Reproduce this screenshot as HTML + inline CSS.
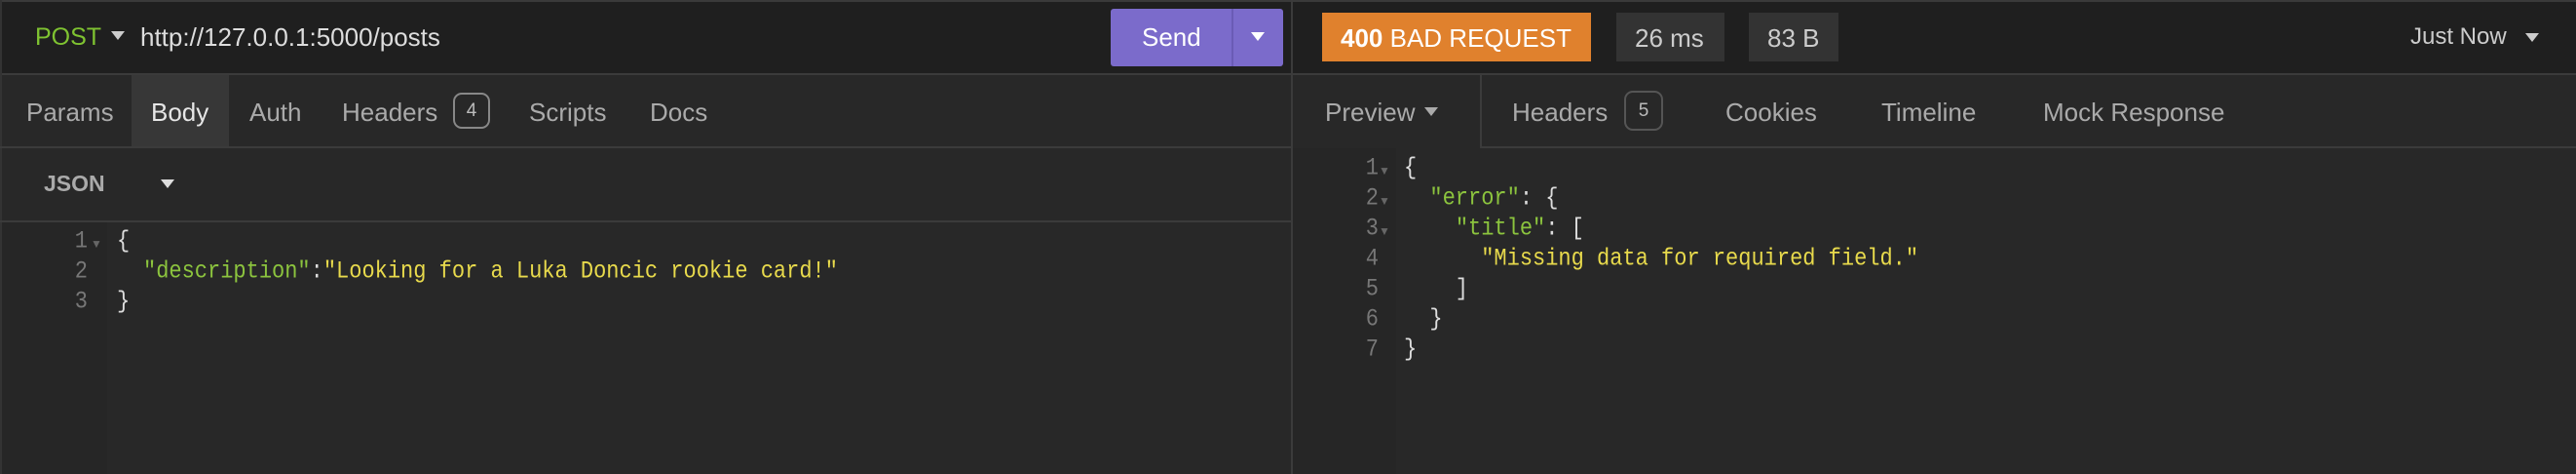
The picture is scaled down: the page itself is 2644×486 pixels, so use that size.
<!DOCTYPE html>
<html><head><meta charset="utf-8"><style>
*{margin:0;padding:0;box-sizing:border-box}
body{width:2644px;height:486px;background:#282828;font-family:"Liberation Sans",sans-serif;position:relative;overflow:hidden;color:#bbb}
.a{position:absolute;white-space:pre}
.tri{display:inline-block;width:0;height:0;border-left:7px solid transparent;border-right:7px solid transparent;border-top:9px solid currentColor}
.mono{font-family:"Liberation Mono",monospace;font-size:22px;transform:scaleY(1.15);transform-origin:left top}
.ln{color:#777;text-align:right;width:40px}
.k{color:#8cc43e}.s{color:#e8da4c}.p{color:#ddd}
.badge{position:absolute;border:2px solid #888;border-radius:9px;font-size:19px;color:#bbb;text-align:center}
</style></head><body>
<div class="a" style="left:0;top:0;width:2644px;height:76px;background:#1f1f1f;border-top:2px solid #3a3a3a"></div>
<div class="a" style="left:0;top:75px;width:2644px;height:2px;background:#3b3b3b"></div>
<div class="a" style="left:1325px;top:0;width:2px;height:486px;background:#3b3b3b"></div>
<div class="a" style="left:0;top:0;width:2px;height:486px;background:#333"></div>

<div class="a" style="left:36px;top:24px;font-size:25px;color:#7fc331">POST</div>
<div class="a" style="left:114px;top:28px;color:#ccc"><span class="tri"></span></div>
<div class="a" style="left:144px;top:23px;font-size:26px;color:#ddd">http://127.0.0.1:5000/posts</div>
<div class="a" style="left:1140px;top:9px;width:177px;height:59px;background:#7b6bcb;border-radius:3px"></div>
<div class="a" style="left:1264px;top:9px;width:2px;height:59px;background:#6a5bb5"></div>
<div class="a" style="left:1172px;top:23px;font-size:26px;color:#fff">Send</div>
<div class="a" style="left:1284px;top:29px;color:#fff"><span class="tri"></span></div>

<div class="a" style="left:135px;top:77px;width:100px;height:73px;background:#373737"></div>
<div class="a" style="left:0;top:150px;width:1325px;height:2px;background:#3b3b3b"></div>
<div class="a" style="left:27px;top:100px;font-size:26px;color:#aaa">Params</div>
<div class="a" style="left:155px;top:100px;font-size:26px;color:#e6e6e6">Body</div>
<div class="a" style="left:256px;top:100px;font-size:26px;color:#aaa">Auth</div>
<div class="a" style="left:351px;top:100px;font-size:26px;color:#aaa">Headers</div>
<div class="badge" style="left:465px;top:95px;width:38px;height:37px;line-height:33px">4</div>
<div class="a" style="left:543px;top:100px;font-size:26px;color:#aaa">Scripts</div>
<div class="a" style="left:667px;top:100px;font-size:26px;color:#aaa">Docs</div>

<div class="a" style="left:45px;top:175px;font-size:23px;font-weight:bold;color:#aaa">JSON</div>
<div class="a" style="left:165px;top:180px;color:#ddd"><span class="tri"></span></div>
<div class="a" style="left:0;top:226px;width:1325px;height:2px;background:#3b3b3b"></div>
<div class="a" style="left:2px;top:228px;width:108px;height:258px;background:#262626"></div>

<div class="a mono ln" style="left:50px;top:233px">1</div><div class="a" style="left:93px;top:243px;color:#666;font-size:12px">▼</div>
<div class="a mono ln" style="left:50px;top:264px">2</div>
<div class="a mono ln" style="left:50px;top:295px">3</div>
<div class="a mono p" style="left:120px;top:233px">{</div>
<div class="a mono" style="left:147px;top:264px"><span class="k">"description"</span><span class="p">:</span><span class="s">"Looking for a Luka Doncic rookie card!"</span></div>
<div class="a mono p" style="left:120px;top:295px">}</div>

<div class="a" style="left:1357px;top:13px;width:276px;height:50px;background:#e0812d"></div>
<div class="a" style="left:1376px;top:24px;font-size:26px;color:#fff"><b>400</b> BAD REQUEST</div>
<div class="a" style="left:1659px;top:13px;width:111px;height:50px;background:#333"></div>
<div class="a" style="left:1678px;top:24px;font-size:26px;color:#ccc">26 ms</div>
<div class="a" style="left:1795px;top:13px;width:92px;height:50px;background:#333"></div>
<div class="a" style="left:1814px;top:24px;font-size:26px;color:#ccc">83 B</div>
<div class="a" style="left:2474px;top:24px;font-size:24px;color:#ccc">Just Now</div>
<div class="a" style="left:2592px;top:30px;color:#ccc"><span class="tri"></span></div>

<div class="a" style="left:1519px;top:77px;width:2px;height:75px;background:#3b3b3b"></div>
<div class="a" style="left:1519px;top:150px;width:1125px;height:2px;background:#3b3b3b"></div>
<div class="a" style="left:1360px;top:100px;font-size:26px;color:#aaa">Preview</div>
<div class="a" style="left:1462px;top:106px;color:#aaa"><span class="tri"></span></div>
<div class="a" style="left:1552px;top:100px;font-size:26px;color:#aaa">Headers</div>
<div class="badge" style="left:1667px;top:93px;width:40px;height:41px;line-height:37px;border-color:#555">5</div>
<div class="a" style="left:1771px;top:100px;font-size:26px;color:#aaa">Cookies</div>
<div class="a" style="left:1931px;top:100px;font-size:26px;color:#aaa">Timeline</div>
<div class="a" style="left:2097px;top:100px;font-size:26px;color:#aaa">Mock Response</div>

<div class="a" style="left:1327px;top:152px;width:106px;height:334px;background:#262626"></div>
<div class="a mono ln" style="left:1375px;top:158px">1</div><div class="a" style="left:1415px;top:168px;color:#666;font-size:12px">▼</div>
<div class="a mono ln" style="left:1375px;top:189px">2</div><div class="a" style="left:1415px;top:199px;color:#666;font-size:12px">▼</div>
<div class="a mono ln" style="left:1375px;top:220px">3</div><div class="a" style="left:1415px;top:230px;color:#666;font-size:12px">▼</div>
<div class="a mono ln" style="left:1375px;top:251px">4</div>
<div class="a mono ln" style="left:1375px;top:282px">5</div>
<div class="a mono ln" style="left:1375px;top:313px">6</div>
<div class="a mono ln" style="left:1375px;top:344px">7</div>
<div class="a mono p" style="left:1441px;top:158px">{</div>
<div class="a mono" style="left:1441px;top:189px"><span class="p">  </span><span class="k">"error"</span><span class="p">: {</span></div>
<div class="a mono" style="left:1441px;top:220px"><span class="p">    </span><span class="k">"title"</span><span class="p">: [</span></div>
<div class="a mono" style="left:1441px;top:251px"><span class="s">      "Missing data for required field."</span></div>
<div class="a mono p" style="left:1441px;top:282px">    ]</div>
<div class="a mono p" style="left:1441px;top:313px">  }</div>
<div class="a mono p" style="left:1441px;top:344px">}</div>
</body></html>
